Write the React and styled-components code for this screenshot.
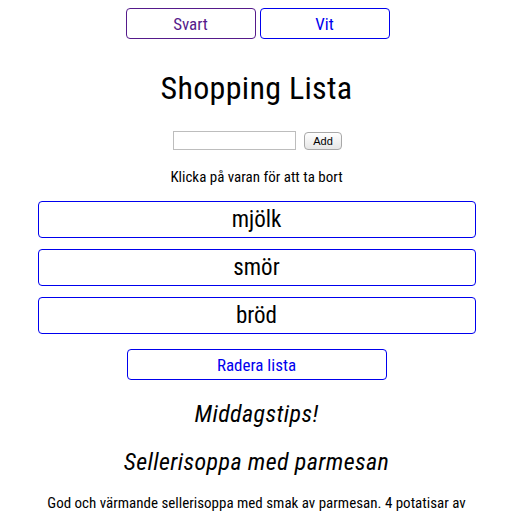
import React, { useState } from "react";
import styled, { createGlobalStyle } from "styled-components";

const GlobalStyle = createGlobalStyle`
  body {
    margin: 0;
    background: #ffffff;
    font-family: "Liberation Sans Narrow", "Roboto Condensed", "Liberation Sans", sans-serif;
    color: #000;
  }
`;

const Page = styled.div`
  width: 513px;
  display: flex;
  flex-direction: column;
  align-items: center;
  padding-top: 8px;
`;

const ThemeRow = styled.div`
  display: flex;
  gap: 4px;
  margin-left: 2px;
`;

const ThemeLink = styled.a`
  box-sizing: border-box;
  width: ${(p) => p.$w}px;
  height: 31px;
  display: flex;
  align-items: center;
  justify-content: center;
  border: 1px solid ${(p) => p.$color};
  border-radius: 4px;
  color: ${(p) => p.$color};
  font-size: 17px;
  text-decoration: none;
  cursor: pointer;
`;

const Title = styled.h1`
  margin: 31px 0 0;
  font-size: 32px;
  font-weight: normal;
  line-height: 37px;
  letter-spacing: 0.3px;
`;

const AddRow = styled.div`
  display: flex;
  align-items: center;
  gap: 8px;
  margin-top: 24px;
  margin-left: 2px;
  font-family: "Liberation Sans", Arial, sans-serif;
`;

const TextInput = styled.input`
  box-sizing: border-box;
  width: 123px;
  height: 19px;
  border: 1px solid #bdbdbd;
  padding: 1px 3px;
  font-size: 12px;
`;

const AddButton = styled.button`
  box-sizing: border-box;
  height: 18px;
  padding: 0 8px;
  border: 1px solid #a8a8a8;
  border-radius: 4px;
  background: linear-gradient(#ffffff, #e6e6e6);
  font-family: "Liberation Sans", Arial, sans-serif;
  font-size: 11px;
  line-height: 16px;
`;

const Hint = styled.p`
  margin: 18px 0 0;
  font-size: 15px;
  line-height: 18px;
`;

const List = styled.ul`
  list-style: none;
  margin: 15px 0 0;
  padding: 0;
  display: flex;
  flex-direction: column;
  gap: 11px;
`;

const Item = styled.li`
  box-sizing: border-box;
  width: 438px;
  height: 37px;
  display: flex;
  align-items: center;
  justify-content: center;
  border: 1px solid #0000ee;
  border-radius: 4px;
  font-size: 23px;
  cursor: pointer;
`;

const ClearButton = styled.button`
  box-sizing: border-box;
  width: 260px;
  height: 31px;
  margin-top: 15px;
  border: 1px solid #0000ee;
  border-radius: 4px;
  background: #fff;
  color: #0000ee;
  font-family: inherit;
  font-size: 17px;
  cursor: pointer;
`;

const Heading = styled.h2`
  margin: ${(p) => p.$top}px 0 0;
  font-size: 24px;
  font-style: italic;
  font-weight: normal;
  line-height: 28px;
  letter-spacing: 0.4px;
`;

const Recipe = styled.p`
  margin: 19px 0 0;
  width: 440px;
  text-align: center;
  font-size: 15px;
  line-height: 17px;
`;

export default function App() {
  const [items, setItems] = useState(["mjölk", "smör", "bröd"]);
  const [text, setText] = useState("");

  const add = () => {
    if (text.trim()) setItems([...items, text.trim()]);
    setText("");
  };

  return (
    <>
      <GlobalStyle />
      <Page>
        <ThemeRow>
          <ThemeLink $w={130} $color="#551a8b">Svart</ThemeLink>
          <ThemeLink $w={130} $color="#0000ee">Vit</ThemeLink>
        </ThemeRow>
        <Title>Shopping Lista</Title>
        <AddRow>
          <TextInput value={text} onChange={(e) => setText(e.target.value)} />
          <AddButton onClick={add}>Add</AddButton>
        </AddRow>
        <Hint>Klicka på varan för att ta bort</Hint>
        <List>
          {items.map((it, i) => (
            <Item key={i} onClick={() => setItems(items.filter((_, j) => j !== i))}>
              {it}
            </Item>
          ))}
        </List>
        <ClearButton onClick={() => setItems([])}>Radera lista</ClearButton>
        <Heading $top={20}>Middagstips!</Heading>
        <Heading $top={20}>Sellerisoppa med parmesan</Heading>
        <Recipe>
          God och värmande sellerisoppa med smak av parmesan. 4 potatisar av
          medelstorlek, 1 liten selleri, 1 gul lök, 1 liter grönsaksbuljong.
        </Recipe>
      </Page>
    </>
  );
}
